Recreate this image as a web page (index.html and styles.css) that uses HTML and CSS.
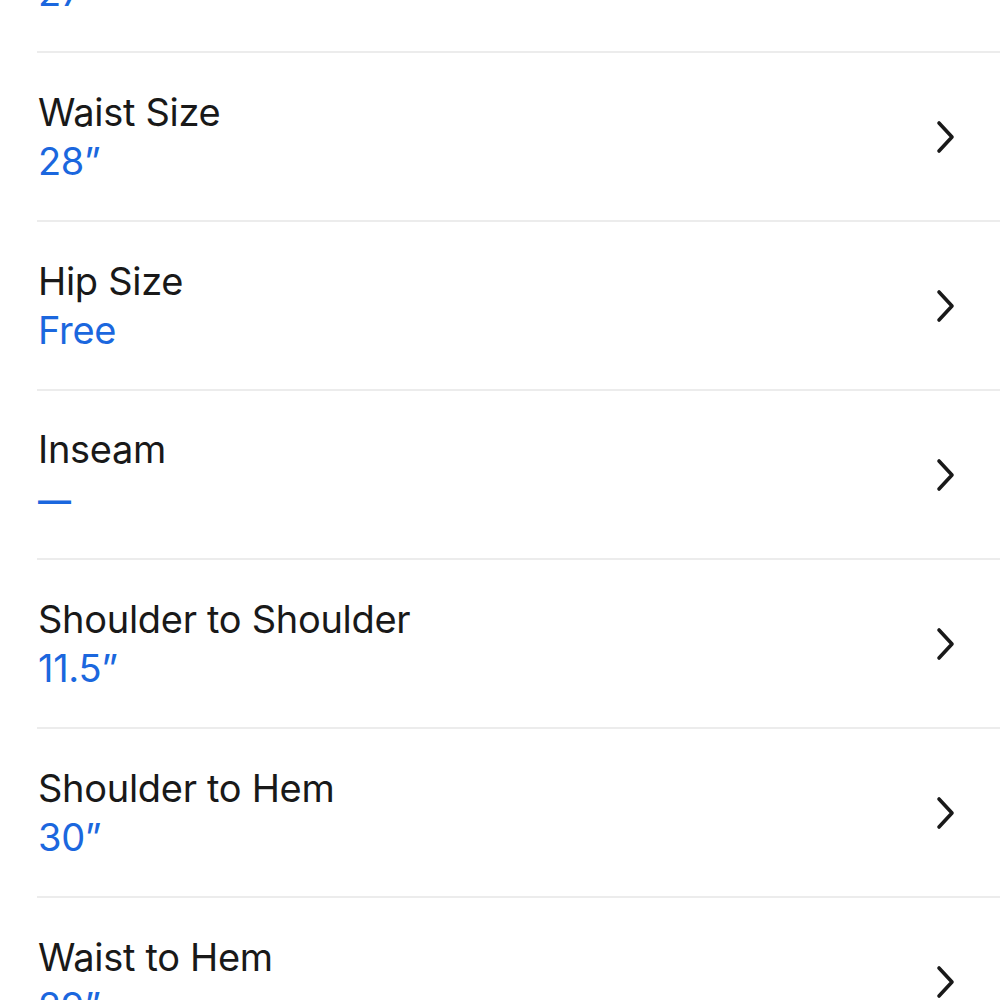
FILE: index.html
```html
<!DOCTYPE html>
<html lang="en">
<head>
<meta charset="utf-8">
<link rel="stylesheet" href="styles.css">
</head>
<body>
<ul class="list">
  <li class="row"><div class="text"><div class="title">Bust Size</div><div class="value">27”</div></div><svg class="chev" viewBox="0 0 24 36"><path d="M5 4 L18 18 L5 32"/></svg></li>
  <li class="row"><div class="text"><div class="title">Waist Size</div><div class="value">28”</div></div><svg class="chev" viewBox="0 0 24 36"><path d="M5 4 L18 18 L5 32"/></svg></li>
  <li class="row"><div class="text"><div class="title">Hip Size</div><div class="value">Free</div></div><svg class="chev" viewBox="0 0 24 36"><path d="M5 4 L18 18 L5 32"/></svg></li>
  <li class="row"><div class="text"><div class="title">Inseam</div><div class="value"><span class="dash">—</span></div></div><svg class="chev" viewBox="0 0 24 36"><path d="M5 4 L18 18 L5 32"/></svg></li>
  <li class="row"><div class="text"><div class="title">Shoulder to Shoulder</div><div class="value">11.5”</div></div><svg class="chev" viewBox="0 0 24 36"><path d="M5 4 L18 18 L5 32"/></svg></li>
  <li class="row"><div class="text"><div class="title">Shoulder to Hem</div><div class="value">30”</div></div><svg class="chev" viewBox="0 0 24 36"><path d="M5 4 L18 18 L5 32"/></svg></li>
  <li class="row"><div class="text"><div class="title">Waist to Hem</div><div class="value">29”</div></div><svg class="chev" viewBox="0 0 24 36"><path d="M5 4 L18 18 L5 32"/></svg></li>
</ul>
</body>
</html>
```
FILE: styles.css
```css
html, body {
  margin: 0;
  padding: 0;
  background: #fff;
  overflow: hidden;
}
body {
  font-family: Inter, "Noto Sans", sans-serif;
  color: #191919;
}
.list {
  list-style: none;
  margin: -116px 0 0 0;
  padding: 0 0 0 37px;
}
.row {
  display: flex;
  align-items: center;
  justify-content: space-between;
  height: 167px;
  border-bottom: 2px solid #ececec;
  padding-right: 42px;
}
.text {
  padding-left: 1px;
}
.title {
  font-size: 38px;
  line-height: 49px;
  letter-spacing: -0.3px;
}
.value {
  font-size: 38px;
  line-height: 49px;
  color: #1b67de;
  letter-spacing: -0.3px;
}
.dash {
  font-size: 33px;
  font-weight: 600;
}
.chev {
  width: 24px;
  height: 36px;
  fill: none;
  stroke: #191919;
  stroke-width: 3.6;
  stroke-linecap: round;
  stroke-linejoin: round;
}
```
